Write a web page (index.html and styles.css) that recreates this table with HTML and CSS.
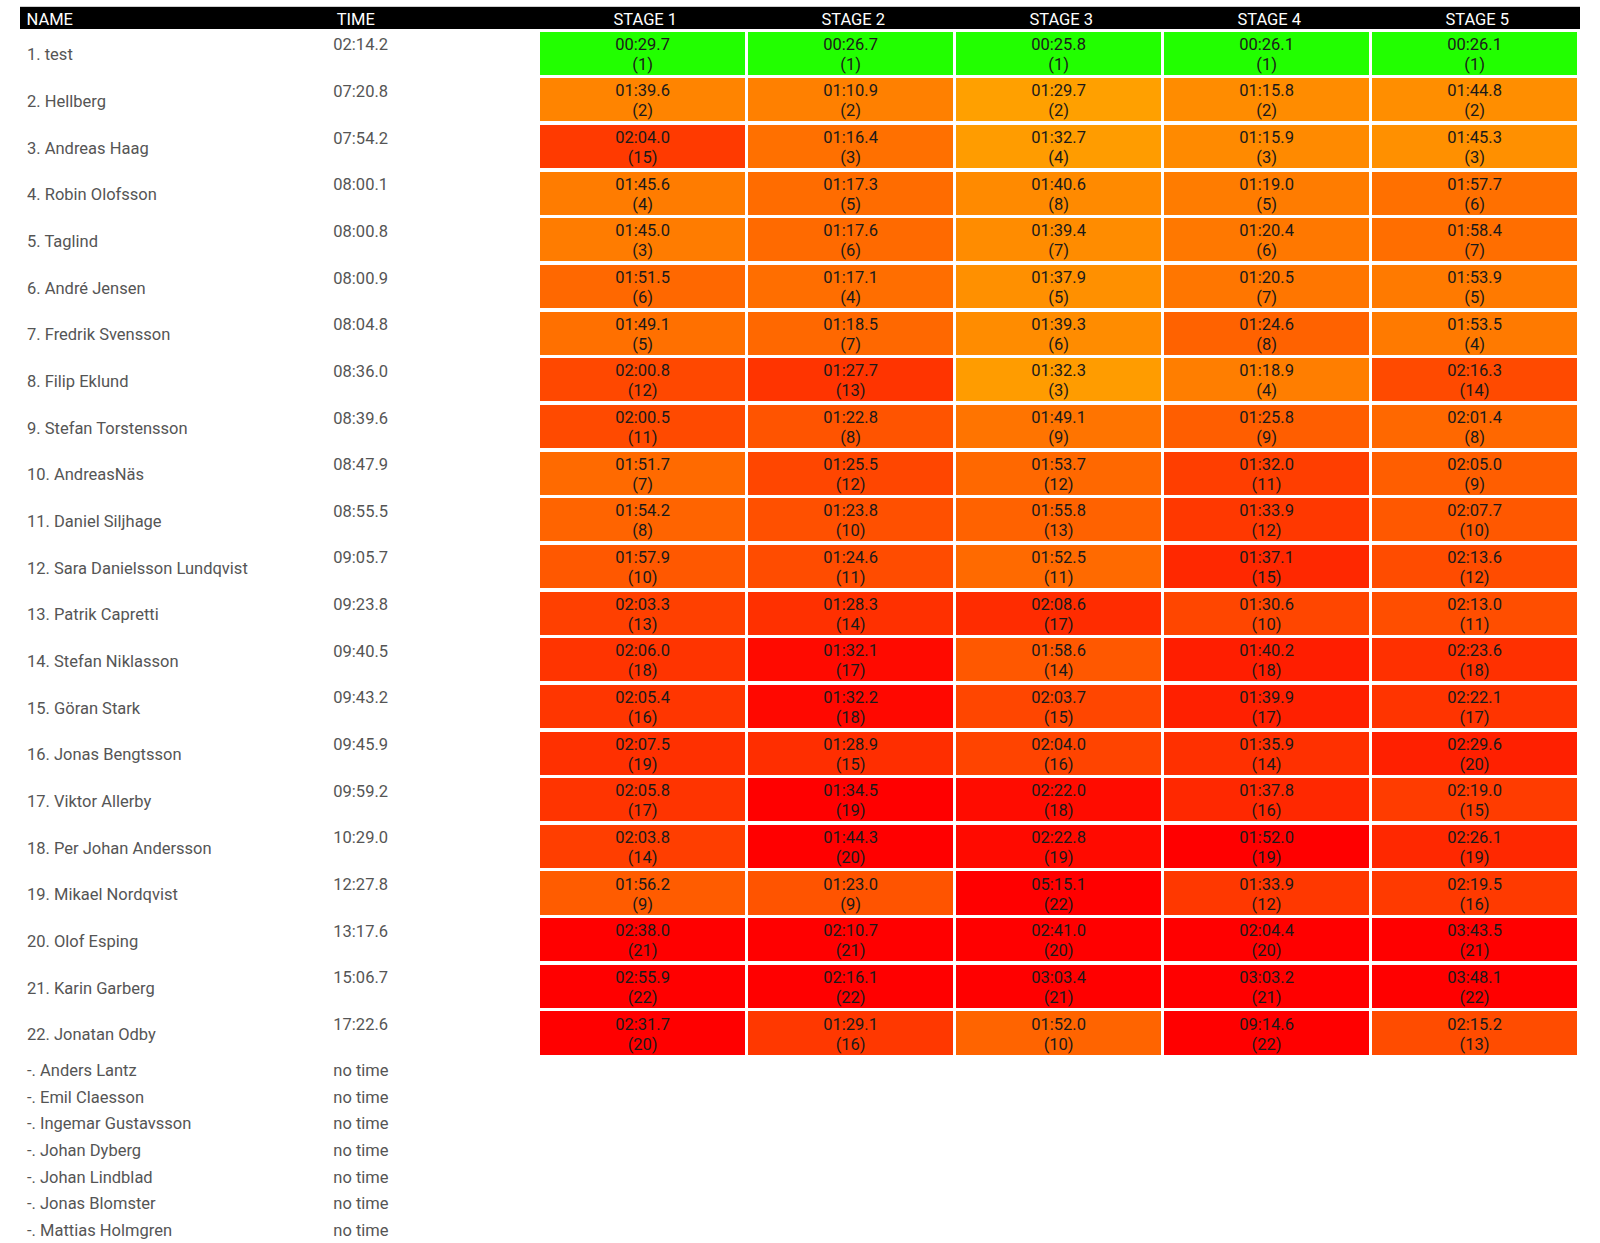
FILE: index.html
```html
<!DOCTYPE html>
<html lang="sv">
<head>
<meta charset="utf-8">
<title>Results</title>
<link rel="stylesheet" href="styles.css">
</head>
<body>
<div class="board">
  <div class="head">
    <div class="h-name">NAME</div>
    <div class="h-time">TIME</div>
    <div class="h-stage">STAGE 1</div>
    <div class="h-stage">STAGE 2</div>
    <div class="h-stage">STAGE 3</div>
    <div class="h-stage">STAGE 4</div>
    <div class="h-stage">STAGE 5</div>
  </div>
  <div class="rows">
    <div class="row"><div class="name">1. test</div><div class="time">02:14.2</div>
      <div class="cell" style="background:#22ff00">00:29.7<br>(1)</div><div class="cell" style="background:#22ff00">00:26.7<br>(1)</div><div class="cell" style="background:#22ff00">00:25.8<br>(1)</div><div class="cell" style="background:#22ff00">00:26.1<br>(1)</div><div class="cell" style="background:#22ff00">00:26.1<br>(1)</div></div>
    <div class="row"><div class="name">2. Hellberg</div><div class="time">07:20.8</div>
      <div class="cell" style="background:#ff8400">01:39.6<br>(2)</div><div class="cell" style="background:#ff8000">01:10.9<br>(2)</div><div class="cell" style="background:#ffa000">01:29.7<br>(2)</div><div class="cell" style="background:#ff8c00">01:15.8<br>(2)</div><div class="cell" style="background:#ff8e00">01:44.8<br>(2)</div></div>
    <div class="row"><div class="name">3. Andreas Haag</div><div class="time">07:54.2</div>
      <div class="cell" style="background:#ff3a00">02:04.0<br>(15)</div><div class="cell" style="background:#ff7000">01:16.4<br>(3)</div><div class="cell" style="background:#ff9c00">01:32.7<br>(4)</div><div class="cell" style="background:#ff8a00">01:15.9<br>(3)</div><div class="cell" style="background:#ff9000">01:45.3<br>(3)</div></div>
    <div class="row"><div class="name">4. Robin Olofsson</div><div class="time">08:00.1</div>
      <div class="cell" style="background:#ff7c00">01:45.6<br>(4)</div><div class="cell" style="background:#ff6c00">01:17.3<br>(5)</div><div class="cell" style="background:#ff8a00">01:40.6<br>(8)</div><div class="cell" style="background:#ff7c00">01:19.0<br>(5)</div><div class="cell" style="background:#ff7000">01:57.7<br>(6)</div></div>
    <div class="row"><div class="name">5. Taglind</div><div class="time">08:00.8</div>
      <div class="cell" style="background:#ff7c00">01:45.0<br>(3)</div><div class="cell" style="background:#ff6a00">01:17.6<br>(6)</div><div class="cell" style="background:#ff8c00">01:39.4<br>(7)</div><div class="cell" style="background:#ff7800">01:20.4<br>(6)</div><div class="cell" style="background:#ff6e00">01:58.4<br>(7)</div></div>
    <div class="row"><div class="name">6. André Jensen</div><div class="time">08:00.9</div>
      <div class="cell" style="background:#ff6800">01:51.5<br>(6)</div><div class="cell" style="background:#ff6e00">01:17.1<br>(4)</div><div class="cell" style="background:#ff9000">01:37.9<br>(5)</div><div class="cell" style="background:#ff7600">01:20.5<br>(7)</div><div class="cell" style="background:#ff7a00">01:53.9<br>(5)</div></div>
    <div class="row"><div class="name">7. Fredrik Svensson</div><div class="time">08:04.8</div>
      <div class="cell" style="background:#ff7000">01:49.1<br>(5)</div><div class="cell" style="background:#ff6800">01:18.5<br>(7)</div><div class="cell" style="background:#ff8c00">01:39.3<br>(6)</div><div class="cell" style="background:#ff6200">01:24.6<br>(8)</div><div class="cell" style="background:#ff7a00">01:53.5<br>(4)</div></div>
    <div class="row"><div class="name">8. Filip Eklund</div><div class="time">08:36.0</div>
      <div class="cell" style="background:#ff4800">02:00.8<br>(12)</div><div class="cell" style="background:#ff3400">01:27.7<br>(13)</div><div class="cell" style="background:#ff9c00">01:32.3<br>(3)</div><div class="cell" style="background:#ff7e00">01:18.9<br>(4)</div><div class="cell" style="background:#ff4a00">02:16.3<br>(14)</div></div>
    <div class="row"><div class="name">9. Stefan Torstensson</div><div class="time">08:39.6</div>
      <div class="cell" style="background:#ff4a00">02:00.5<br>(11)</div><div class="cell" style="background:#ff5400">01:22.8<br>(8)</div><div class="cell" style="background:#ff7400">01:49.1<br>(9)</div><div class="cell" style="background:#ff5e00">01:25.8<br>(9)</div><div class="cell" style="background:#ff6800">02:01.4<br>(8)</div></div>
    <div class="row"><div class="name">10. AndreasNäs</div><div class="time">08:47.9</div>
      <div class="cell" style="background:#ff6a00">01:51.7<br>(7)</div><div class="cell" style="background:#ff4600">01:25.5<br>(12)</div><div class="cell" style="background:#ff6800">01:53.7<br>(12)</div><div class="cell" style="background:#ff3e00">01:32.0<br>(11)</div><div class="cell" style="background:#ff5e00">02:05.0<br>(9)</div></div>
    <div class="row"><div class="name">11. Daniel Siljhage</div><div class="time">08:55.5</div>
      <div class="cell" style="background:#ff6400">01:54.2<br>(8)</div><div class="cell" style="background:#ff5000">01:23.8<br>(10)</div><div class="cell" style="background:#ff6200">01:55.8<br>(13)</div><div class="cell" style="background:#ff3800">01:33.9<br>(12)</div><div class="cell" style="background:#ff5800">02:07.7<br>(10)</div></div>
    <div class="row"><div class="name">12. Sara Danielsson Lundqvist</div><div class="time">09:05.7</div>
      <div class="cell" style="background:#ff5800">01:57.9<br>(10)</div><div class="cell" style="background:#ff4c00">01:24.6<br>(11)</div><div class="cell" style="background:#ff6a00">01:52.5<br>(11)</div><div class="cell" style="background:#ff2800">01:37.1<br>(15)</div><div class="cell" style="background:#ff4c00">02:13.6<br>(12)</div></div>
    <div class="row"><div class="name">13. Patrik Capretti</div><div class="time">09:23.8</div>
      <div class="cell" style="background:#ff4000">02:03.3<br>(13)</div><div class="cell" style="background:#ff3000">01:28.3<br>(14)</div><div class="cell" style="background:#ff2c00">02:08.6<br>(17)</div><div class="cell" style="background:#ff4600">01:30.6<br>(10)</div><div class="cell" style="background:#ff4e00">02:13.0<br>(11)</div></div>
    <div class="row"><div class="name">14. Stefan Niklasson</div><div class="time">09:40.5</div>
      <div class="cell" style="background:#ff3400">02:06.0<br>(18)</div><div class="cell" style="background:#ff0a00">01:32.1<br>(17)</div><div class="cell" style="background:#ff5800">01:58.6<br>(14)</div><div class="cell" style="background:#ff1e00">01:40.2<br>(18)</div><div class="cell" style="background:#ff3000">02:23.6<br>(18)</div></div>
    <div class="row"><div class="name">15. Göran Stark</div><div class="time">09:43.2</div>
      <div class="cell" style="background:#ff3600">02:05.4<br>(16)</div><div class="cell" style="background:#ff0800">01:32.2<br>(18)</div><div class="cell" style="background:#ff4600">02:03.7<br>(15)</div><div class="cell" style="background:#ff2000">01:39.9<br>(17)</div><div class="cell" style="background:#ff3400">02:22.1<br>(17)</div></div>
    <div class="row"><div class="name">16. Jonas Bengtsson</div><div class="time">09:45.9</div>
      <div class="cell" style="background:#ff3000">02:07.5<br>(19)</div><div class="cell" style="background:#ff2e00">01:28.9<br>(15)</div><div class="cell" style="background:#ff4400">02:04.0<br>(16)</div><div class="cell" style="background:#ff3000">01:35.9<br>(14)</div><div class="cell" style="background:#ff2000">02:29.6<br>(20)</div></div>
    <div class="row"><div class="name">17. Viktor Allerby</div><div class="time">09:59.2</div>
      <div class="cell" style="background:#ff3400">02:05.8<br>(17)</div><div class="cell" style="background:#ff0000">01:34.5<br>(19)</div><div class="cell" style="background:#ff0c00">02:22.0<br>(18)</div><div class="cell" style="background:#ff2800">01:37.8<br>(16)</div><div class="cell" style="background:#ff3c00">02:19.0<br>(15)</div></div>
    <div class="row"><div class="name">18. Per Johan Andersson</div><div class="time">10:29.0</div>
      <div class="cell" style="background:#ff3e00">02:03.8<br>(14)</div><div class="cell" style="background:#ff0000">01:44.3<br>(20)</div><div class="cell" style="background:#ff0a00">02:22.8<br>(19)</div><div class="cell" style="background:#ff0000">01:52.0<br>(19)</div><div class="cell" style="background:#ff2800">02:26.1<br>(19)</div></div>
    <div class="row"><div class="name">19. Mikael Nordqvist</div><div class="time">12:27.8</div>
      <div class="cell" style="background:#ff5c00">01:56.2<br>(9)</div><div class="cell" style="background:#ff5400">01:23.0<br>(9)</div><div class="cell" style="background:#ff0000">05:15.1<br>(22)</div><div class="cell" style="background:#ff3800">01:33.9<br>(12)</div><div class="cell" style="background:#ff3a00">02:19.5<br>(16)</div></div>
    <div class="row"><div class="name">20. Olof Esping</div><div class="time">13:17.6</div>
      <div class="cell" style="background:#ff0000">02:38.0<br>(21)</div><div class="cell" style="background:#ff0000">02:10.7<br>(21)</div><div class="cell" style="background:#ff0000">02:41.0<br>(20)</div><div class="cell" style="background:#ff0000">02:04.4<br>(20)</div><div class="cell" style="background:#ff0000">03:43.5<br>(21)</div></div>
    <div class="row"><div class="name">21. Karin Garberg</div><div class="time">15:06.7</div>
      <div class="cell" style="background:#ff0000">02:55.9<br>(22)</div><div class="cell" style="background:#ff0000">02:16.1<br>(22)</div><div class="cell" style="background:#ff0000">03:03.4<br>(21)</div><div class="cell" style="background:#ff0000">03:03.2<br>(21)</div><div class="cell" style="background:#ff0000">03:48.1<br>(22)</div></div>
    <div class="row"><div class="name">22. Jonatan Odby</div><div class="time">17:22.6</div>
      <div class="cell" style="background:#ff0000">02:31.7<br>(20)</div><div class="cell" style="background:#ff3800">01:29.1<br>(16)</div><div class="cell" style="background:#ff6400">01:52.0<br>(10)</div><div class="cell" style="background:#ff0000">09:14.6<br>(22)</div><div class="cell" style="background:#ff4c00">02:15.2<br>(13)</div></div>
    <div class="row dnf"><div class="name">-. Anders Lantz</div><div class="time">no time</div></div>
    <div class="row dnf"><div class="name">-. Emil Claesson</div><div class="time">no time</div></div>
    <div class="row dnf"><div class="name">-. Ingemar Gustavsson</div><div class="time">no time</div></div>
    <div class="row dnf"><div class="name">-. Johan Dyberg</div><div class="time">no time</div></div>
    <div class="row dnf"><div class="name">-. Johan Lindblad</div><div class="time">no time</div></div>
    <div class="row dnf"><div class="name">-. Jonas Blomster</div><div class="time">no time</div></div>
    <div class="row dnf"><div class="name">-. Mattias Holmgren</div><div class="time">no time</div></div>
  </div>
</div>
</body>
</html>
```

FILE: styles.css
```css
html, body {
  margin: 0;
  padding: 0;
  background: #ffffff;
}

body {
  font-family: Roboto, "Liberation Sans", Arial, sans-serif;
  font-size: 16.5px;
  line-height: normal;
}

.board {
  padding: 6px 20px 0 20px;
}

.head,
.row {
  display: grid;
  grid-template-columns: 304px 210.67px repeat(5, 205.33px);
  column-gap: 2.67px;
}

.head {
  box-sizing: border-box;
  height: 23.33px;
  border-top: 1px solid #cfcfcf;
  background: #000000;
  color: #ffffff;
  font-weight: 400;
  padding-top: 2.7px;
  margin-bottom: 2.33px;
  white-space: nowrap;
}

.h-name {
  padding-left: 6.5px;
}

.h-time {
  padding-left: 10px;
}

.h-stage {
  text-align: center;
  padding-left: 5.33px;
}

.rows {
  display: flex;
  flex-direction: column;
  gap: 4px;
}

.row {
  box-sizing: border-box;
  height: 42.67px;
}

.name {
  color: #555555;
  padding: 13.8px 0 0 7px;
  white-space: nowrap;
}

.time {
  color: #555555;
  padding: 3.6px 0 0 6.67px;
}

.cell {
  color: #1a1a1a;
  text-align: center;
  line-height: 20px;
  padding-top: 3.1px;
}

.row.dnf {
  height: 22.67px;
}

.row.dnf .name,
.row.dnf .time {
  padding-top: 3px;
}
```
